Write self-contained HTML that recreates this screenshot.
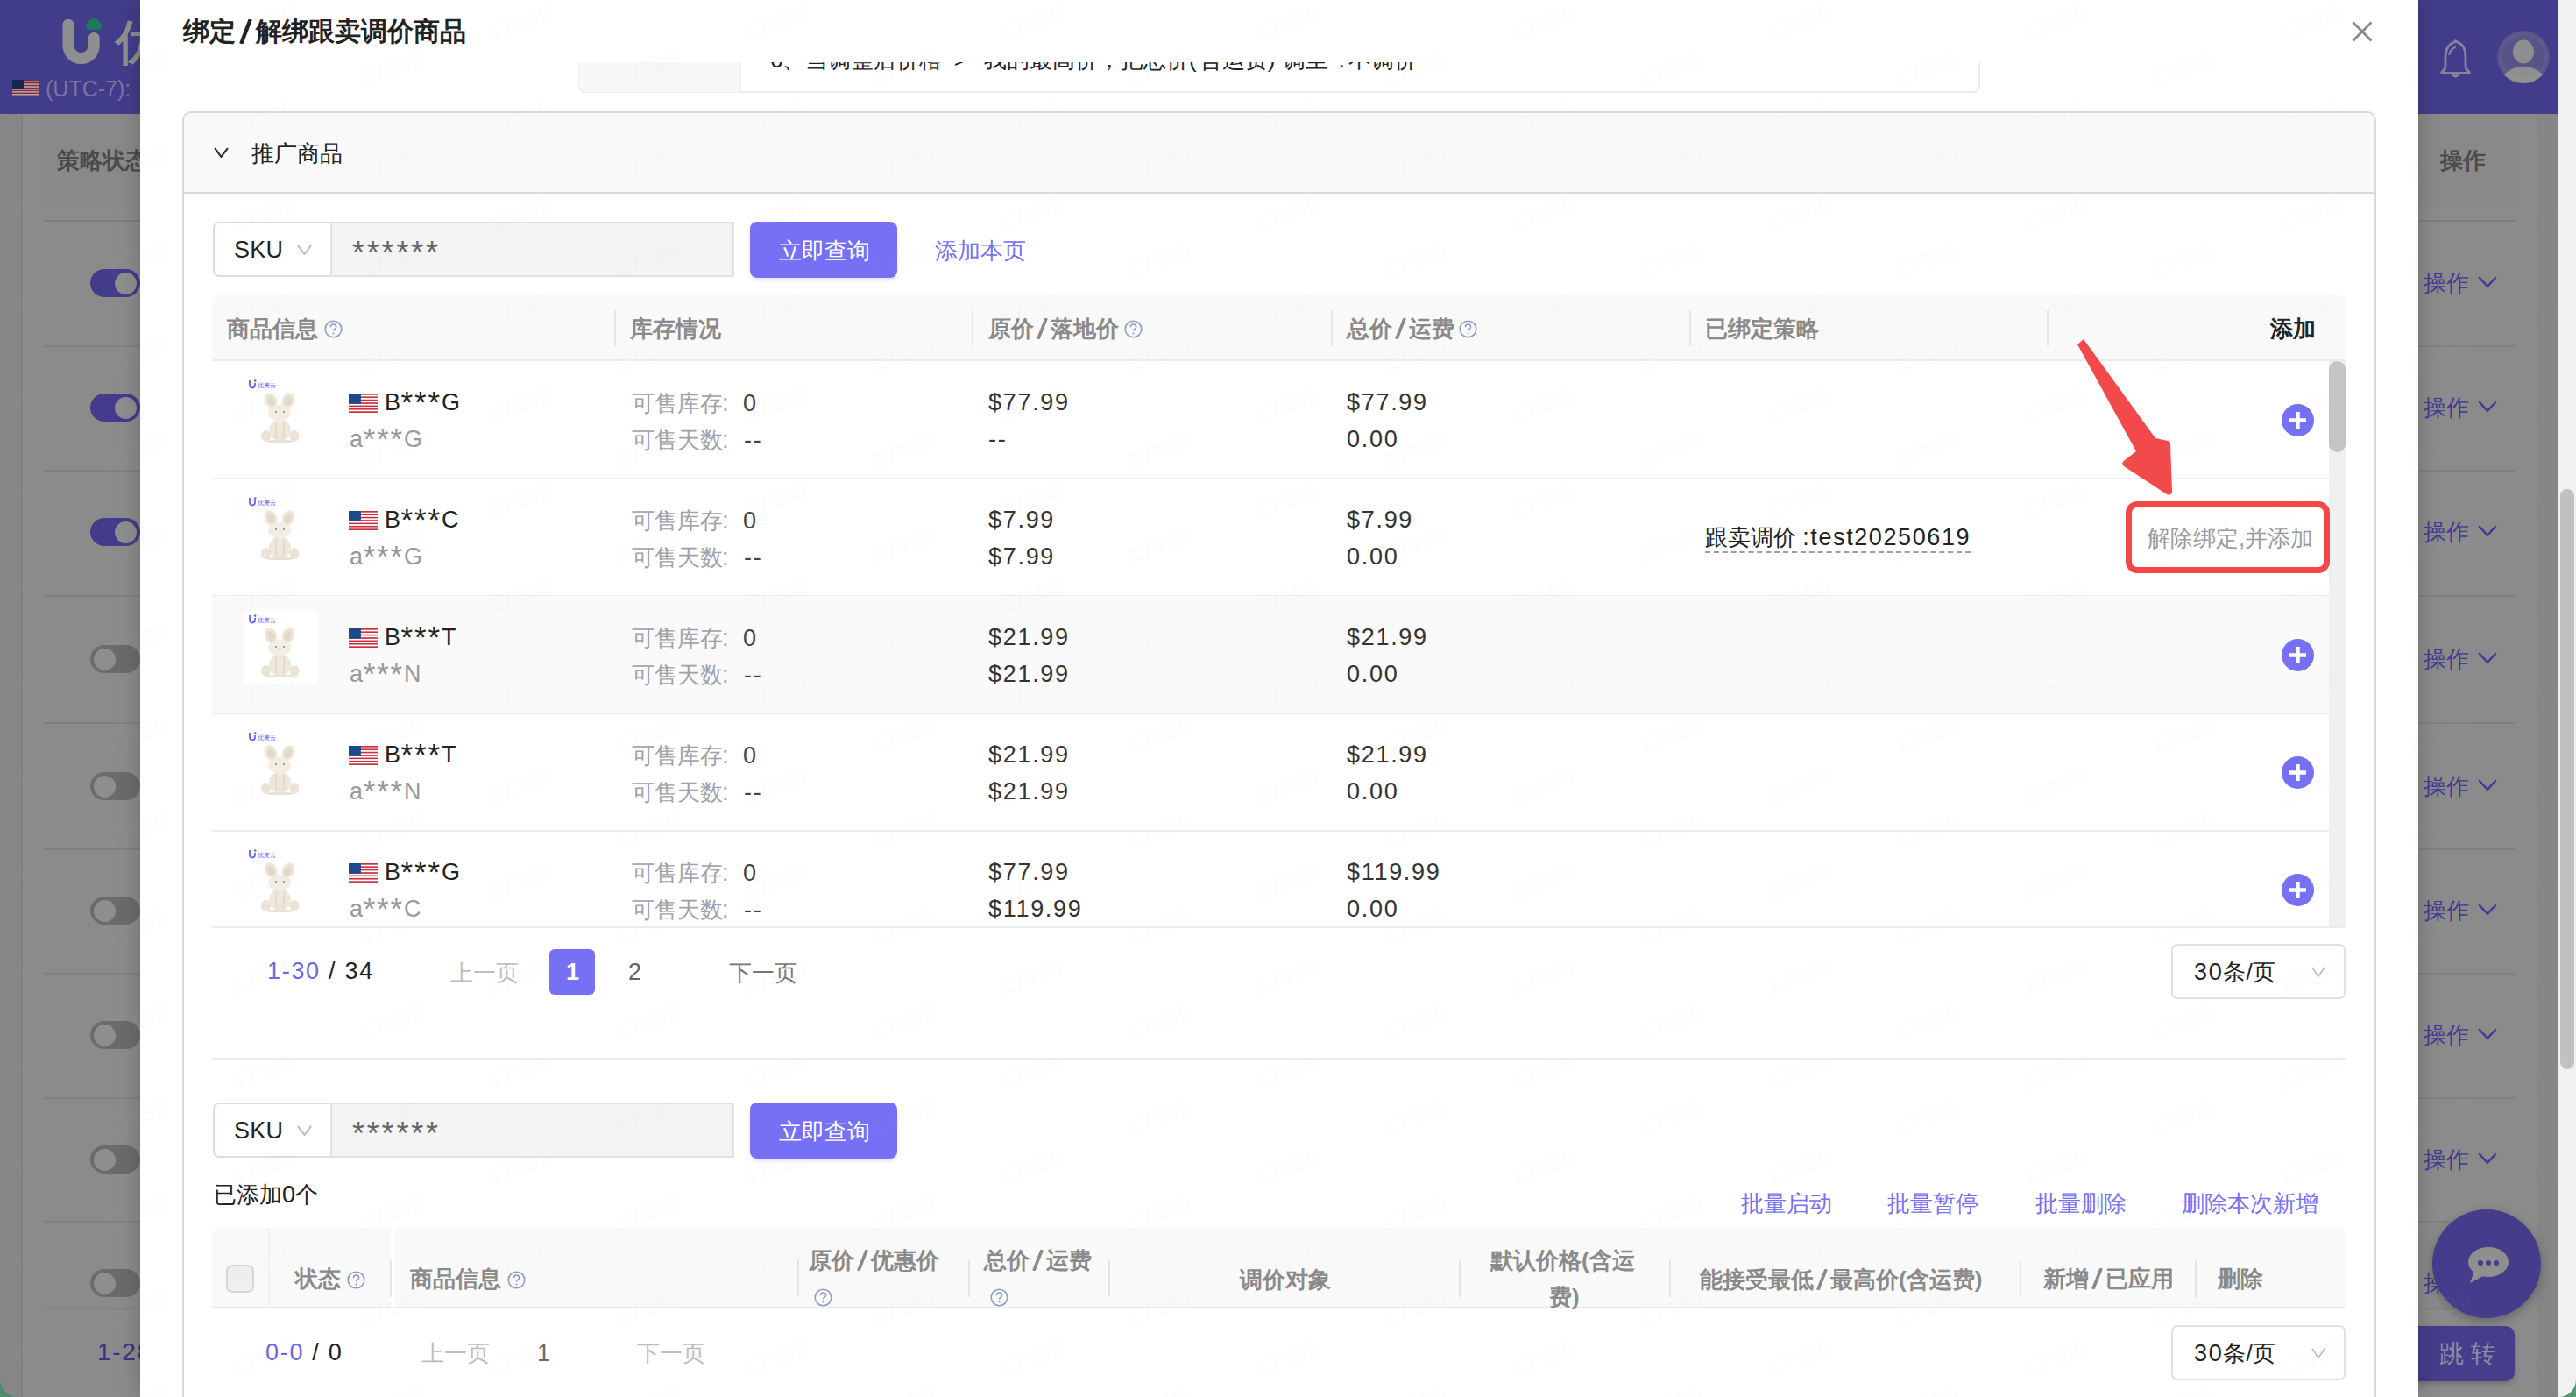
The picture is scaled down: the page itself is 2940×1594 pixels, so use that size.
<!DOCTYPE html><html><head><meta charset="utf-8"><style>
html,body{margin:0;padding:0}
body{width:2940px;height:1594px;overflow:hidden;position:relative;background:#8b8b8b;font-family:"Liberation Sans",sans-serif}
.a{position:absolute;box-sizing:border-box}
.t{position:absolute;white-space:nowrap}
</style></head><body>
<div class="a" style="left:0px;top:1550px;width:24px;height:44px;background:#4b8a6a"></div>
<div class="a" style="left:0px;top:130px;width:24px;height:1464px;background:#868686;border-bottom-left-radius:20px"></div>
<div class="a" style="left:24px;top:130px;width:2px;height:1464px;background:#7f7f7f"></div>
<div class="a" style="left:0px;top:0px;width:2920px;height:130px;background:#423d8a"></div>
<svg class="a" style="left:0px;top:0px;" width="160" height="130" viewBox="0 0 160 130"><path d="M78 28.2 V52 A14.6 14.6 0 0 0 107.2 52 V43.5" fill="none" stroke="#8f8f8f" stroke-width="13" stroke-linecap="round"/><ellipse cx="107.3" cy="26.5" rx="6.5" ry="5.5" fill="#1f7a5c"/><circle cx="102.8" cy="29.5" r="4.6" fill="#1f7a5c"/><circle cx="111.6" cy="29.5" r="4.6" fill="#1f7a5c"/><rect x="100" y="29" width="15" height="4.5" rx="2" fill="#1f7a5c"/></svg>
<div class="t" style="left:132px;top:28.0px;font-size:54px;line-height:40px;color:#8f8f8f;font-weight:bold;">优</div>
<svg class="a" style="left:14px;top:91px;opacity:1.0" width="31" height="19" viewBox="0 0 31 19"><rect x="0" y="0.00" width="31" height="1.76" fill="#8c2636"/><rect x="0" y="1.46" width="31" height="1.76" fill="#b6b6be"/><rect x="0" y="2.92" width="31" height="1.76" fill="#8c2636"/><rect x="0" y="4.38" width="31" height="1.76" fill="#b6b6be"/><rect x="0" y="5.85" width="31" height="1.76" fill="#8c2636"/><rect x="0" y="7.31" width="31" height="1.76" fill="#b6b6be"/><rect x="0" y="8.77" width="31" height="1.76" fill="#8c2636"/><rect x="0" y="10.23" width="31" height="1.76" fill="#b6b6be"/><rect x="0" y="11.69" width="31" height="1.76" fill="#8c2636"/><rect x="0" y="13.15" width="31" height="1.76" fill="#b6b6be"/><rect x="0" y="14.62" width="31" height="1.76" fill="#8c2636"/><rect x="0" y="16.08" width="31" height="1.76" fill="#b6b6be"/><rect x="0" y="17.54" width="31" height="1.76" fill="#8c2636"/><rect x="0" y="0" width="13.0" height="10.2" fill="#15284f"/></svg>
<div class="t" style="left:52px;top:81.0px;font-size:25px;line-height:40px;color:#78759f;font-weight:normal;">(UTC-7):</div>
<svg class="a" style="left:2780px;top:40px;" width="44" height="50" viewBox="0 0 44 50"><path d="M21.5 8 Q22 5.5 24.5 8 Q34 11 34 26 V36 Q34 39 38 42 Q39 43.5 37 43.5 H8 Q6 43.5 7 42 Q11 39 11 36 V26 Q11 11 21.5 8 Z" fill="none" stroke="#85849c" stroke-width="2.8" stroke-linejoin="round"/><path d="M18.5 44 Q22.5 50 26.5 44" fill="none" stroke="#85849c" stroke-width="2.8"/><path d="M15.5 22 Q17 16 22 14" fill="none" stroke="#85849c" stroke-width="2.2" stroke-linecap="round"/></svg>
<svg class="a" style="left:2850px;top:35px;" width="60" height="60" viewBox="0 0 60 60"><defs><clipPath id="cav"><circle cx="30" cy="30" r="30"/></clipPath></defs><circle cx="30" cy="30" r="30" fill="#58548a"/><g clip-path="url(#cav)"><ellipse cx="30" cy="24" rx="12" ry="13.5" fill="#8e8e8e"/><ellipse cx="30" cy="57" rx="24" ry="16" fill="#8e8e8e"/><circle cx="30" cy="30" r="26" fill="none" stroke="rgba(255,255,255,0.04)" stroke-width="4"/></g></svg>
<div class="a" style="left:50px;top:130px;width:110px;height:105px;background:#898989"></div>
<div class="t" style="left:65px;top:163.0px;font-size:26px;line-height:40px;color:#4a4a4a;font-weight:bold;">策略状态</div>
<div class="a" style="left:50px;top:251px;width:110px;height:2px;background:#7d7d7d"></div>
<div class="a" style="left:103px;top:307px;width:57px;height:32px;border-radius:16px;background:#433c8b"></div>
<div class="a" style="left:131px;top:311px;width:25px;height:25px;border-radius:50%;background:#8e8e8e"></div>
<div class="a" style="left:50px;top:394px;width:110px;height:2px;background:#808080"></div>
<div class="a" style="left:103px;top:449px;width:57px;height:32px;border-radius:16px;background:#433c8b"></div>
<div class="a" style="left:131px;top:453px;width:25px;height:25px;border-radius:50%;background:#8e8e8e"></div>
<div class="a" style="left:50px;top:536px;width:110px;height:2px;background:#808080"></div>
<div class="a" style="left:103px;top:591px;width:57px;height:32px;border-radius:16px;background:#433c8b"></div>
<div class="a" style="left:131px;top:595px;width:25px;height:25px;border-radius:50%;background:#8e8e8e"></div>
<div class="a" style="left:50px;top:679px;width:110px;height:2px;background:#808080"></div>
<div class="a" style="left:103px;top:736px;width:57px;height:32px;border-radius:16px;background:#6b6b6b"></div>
<div class="a" style="left:107px;top:740px;width:25px;height:25px;border-radius:50%;background:#8e8e8e"></div>
<div class="a" style="left:50px;top:824px;width:110px;height:2px;background:#808080"></div>
<div class="a" style="left:103px;top:881px;width:57px;height:32px;border-radius:16px;background:#6b6b6b"></div>
<div class="a" style="left:107px;top:885px;width:25px;height:25px;border-radius:50%;background:#8e8e8e"></div>
<div class="a" style="left:50px;top:968px;width:110px;height:2px;background:#808080"></div>
<div class="a" style="left:103px;top:1023px;width:57px;height:32px;border-radius:16px;background:#6b6b6b"></div>
<div class="a" style="left:107px;top:1027px;width:25px;height:25px;border-radius:50%;background:#8e8e8e"></div>
<div class="a" style="left:50px;top:1110px;width:110px;height:2px;background:#808080"></div>
<div class="a" style="left:103px;top:1165px;width:57px;height:32px;border-radius:16px;background:#6b6b6b"></div>
<div class="a" style="left:107px;top:1169px;width:25px;height:25px;border-radius:50%;background:#8e8e8e"></div>
<div class="a" style="left:50px;top:1252px;width:110px;height:2px;background:#808080"></div>
<div class="a" style="left:103px;top:1307px;width:57px;height:32px;border-radius:16px;background:#6b6b6b"></div>
<div class="a" style="left:107px;top:1311px;width:25px;height:25px;border-radius:50%;background:#8e8e8e"></div>
<div class="a" style="left:50px;top:1393px;width:110px;height:2px;background:#808080"></div>
<div class="a" style="left:103px;top:1448px;width:57px;height:32px;border-radius:16px;background:#6b6b6b"></div>
<div class="a" style="left:107px;top:1452px;width:25px;height:25px;border-radius:50%;background:#8e8e8e"></div>
<div class="t" style="left:111px;top:1523.0px;font-size:28px;line-height:40px;color:#3b3587;font-weight:normal;"><span style="font-size:28px;letter-spacing:1.7px">1-28</span></div>
<div class="a" style="left:50px;top:1492px;width:110px;height:2px;background:#808080"></div>
<div class="a" style="left:2760px;top:1492px;width:110px;height:2px;background:#808080"></div>
<div class="a" style="left:2895px;top:130px;width:25px;height:1464px;background:#858585"></div>
<div class="a" style="left:2760px;top:130px;width:110px;height:105px;background:#898989"></div>
<div class="t" style="left:2785px;top:163.0px;font-size:26px;line-height:40px;color:#4a4a4a;font-weight:bold;">操作</div>
<div class="a" style="left:2760px;top:251px;width:110px;height:2px;background:#7d7d7d"></div>
<div class="t" style="left:2766px;top:303.0px;font-size:26px;line-height:40px;color:#3f3a92;font-weight:normal;">操作</div>
<svg class="a" style="left:2828px;top:315px;" width="22" height="13" viewBox="0 0 22 13"><path d="M1.2 1.2 L11.0 11.8 L20.8 1.2" fill="none" stroke="#3f3a92" stroke-width="2.4"/></svg>
<div class="a" style="left:2760px;top:394px;width:110px;height:2px;background:#808080"></div>
<div class="t" style="left:2766px;top:445.0px;font-size:26px;line-height:40px;color:#3f3a92;font-weight:normal;">操作</div>
<svg class="a" style="left:2828px;top:457px;" width="22" height="13" viewBox="0 0 22 13"><path d="M1.2 1.2 L11.0 11.8 L20.8 1.2" fill="none" stroke="#3f3a92" stroke-width="2.4"/></svg>
<div class="a" style="left:2760px;top:536px;width:110px;height:2px;background:#808080"></div>
<div class="t" style="left:2766px;top:587.0px;font-size:26px;line-height:40px;color:#3f3a92;font-weight:normal;">操作</div>
<svg class="a" style="left:2828px;top:599px;" width="22" height="13" viewBox="0 0 22 13"><path d="M1.2 1.2 L11.0 11.8 L20.8 1.2" fill="none" stroke="#3f3a92" stroke-width="2.4"/></svg>
<div class="a" style="left:2760px;top:679px;width:110px;height:2px;background:#808080"></div>
<div class="t" style="left:2766px;top:732.0px;font-size:26px;line-height:40px;color:#3f3a92;font-weight:normal;">操作</div>
<svg class="a" style="left:2828px;top:744px;" width="22" height="13" viewBox="0 0 22 13"><path d="M1.2 1.2 L11.0 11.8 L20.8 1.2" fill="none" stroke="#3f3a92" stroke-width="2.4"/></svg>
<div class="a" style="left:2760px;top:824px;width:110px;height:2px;background:#808080"></div>
<div class="t" style="left:2766px;top:877.0px;font-size:26px;line-height:40px;color:#3f3a92;font-weight:normal;">操作</div>
<svg class="a" style="left:2828px;top:889px;" width="22" height="13" viewBox="0 0 22 13"><path d="M1.2 1.2 L11.0 11.8 L20.8 1.2" fill="none" stroke="#3f3a92" stroke-width="2.4"/></svg>
<div class="a" style="left:2760px;top:968px;width:110px;height:2px;background:#808080"></div>
<div class="t" style="left:2766px;top:1019.0px;font-size:26px;line-height:40px;color:#3f3a92;font-weight:normal;">操作</div>
<svg class="a" style="left:2828px;top:1031px;" width="22" height="13" viewBox="0 0 22 13"><path d="M1.2 1.2 L11.0 11.8 L20.8 1.2" fill="none" stroke="#3f3a92" stroke-width="2.4"/></svg>
<div class="a" style="left:2760px;top:1110px;width:110px;height:2px;background:#808080"></div>
<div class="t" style="left:2766px;top:1161.0px;font-size:26px;line-height:40px;color:#3f3a92;font-weight:normal;">操作</div>
<svg class="a" style="left:2828px;top:1173px;" width="22" height="13" viewBox="0 0 22 13"><path d="M1.2 1.2 L11.0 11.8 L20.8 1.2" fill="none" stroke="#3f3a92" stroke-width="2.4"/></svg>
<div class="a" style="left:2760px;top:1252px;width:110px;height:2px;background:#808080"></div>
<div class="t" style="left:2766px;top:1303.0px;font-size:26px;line-height:40px;color:#3f3a92;font-weight:normal;">操作</div>
<svg class="a" style="left:2828px;top:1315px;" width="22" height="13" viewBox="0 0 22 13"><path d="M1.2 1.2 L11.0 11.8 L20.8 1.2" fill="none" stroke="#3f3a92" stroke-width="2.4"/></svg>
<div class="a" style="left:2760px;top:1393px;width:110px;height:2px;background:#808080"></div>
<div class="t" style="left:2766px;top:1444.0px;font-size:26px;line-height:40px;color:#3f3a92;font-weight:normal;">操</div>
<div class="a" style="left:2776px;top:1380px;width:124px;height:124px;border-radius:50%;background:#453d8b;box-shadow:0 4px 12px rgba(0,0,0,.28)"></div>
<svg class="a" style="left:2814px;top:1422px;" width="50" height="44" viewBox="0 0 50 44"><ellipse cx="26" cy="18" rx="23" ry="17" fill="#8f8f8f"/><path d="M10 28 L5 42 L22 33 Z" fill="#8f8f8f"/><circle cx="17" cy="19" r="3" fill="#453d8b"/><circle cx="26" cy="19" r="3" fill="#453d8b"/><circle cx="35" cy="19" r="3" fill="#453d8b"/></svg>
<div class="a" style="left:2750px;top:1513px;width:120px;height:63px;border-radius:10px;background:#463d8c;box-shadow:0 3px 6px rgba(0,0,0,.2)"></div>
<div class="t" style="left:2784px;top:1525.0px;font-size:28px;line-height:40px;color:#8d8da6;font-weight:normal;">跳 转</div>
<div class="a" style="left:2920px;top:0px;width:20px;height:1594px;background:#f1f1f1"></div>
<div class="a" style="left:2922px;top:558px;width:16px;height:662px;border-radius:8px;background:#c1c1c1"></div>
<div class="a" style="left:2920px;top:1556px;width:20px;height:38px;background:#4f9c74"></div>
<div class="a" style="left:2920px;top:1530px;width:20px;height:64px;background:#f1f1f1;border-bottom-right-radius:20px"></div>
<div class="a" style="left:160px;top:0px;width:2600px;height:1594px;background:#ffffff;box-shadow:0 0 24px rgba(0,0,0,.22)"></div>
<div class="t" style="left:209px;top:16.0px;font-size:30px;line-height:40px;color:#222;font-weight:bold;">绑定<svg style="display:inline-block;vertical-align:-4px;margin:0 4px 0 4px" width="15" height="28" viewBox="0 0 15 28"><path d="M12.8 0 L2.2 28" stroke="currentColor" stroke-width="4.4"/></svg>解绑跟卖调价商品</div>
<svg class="a" style="left:2684px;top:24px;" width="24" height="24" viewBox="0 0 24 24"><path d="M1.5 1.5 L22.5 22.5 M22.5 1.5 L1.5 22.5" stroke="#8a8a8a" stroke-width="2.8"/></svg>
<div class="a" style="left:160px;top:71px;width:2600px;height:1523px;overflow:hidden">
<div class="a" style="left:500px;top:-51px;width:1600px;height:86px;border:2px solid #ececec;border-radius:8px;background:#fff"></div>
<div class="a" style="left:501px;top:-50px;width:185px;height:84px;background:#f7f7f7;border-right:2px solid #ececec;border-radius:0 0 0 8px"></div>
<div class="t" style="left:719px;top:-23.0px;font-size:26px;line-height:40px;color:#222;font-weight:normal;">6、当调整后价格<span style="letter-spacing:6px"> &gt; </span>我的最高价，把总价<span style="letter-spacing:3px">(</span>含运费<span style="letter-spacing:9px">)</span>调至<span style="letter-spacing:4px"> :</span>不调价</div>
<div class="a" style="left:48px;top:56px;width:2504px;height:1600px;border:2px solid #d9d9d9;border-radius:10px;background:#fff"></div>
<div class="a" style="left:50px;top:58px;width:2500px;height:92px;background:#f9f9f9;border-bottom:2px solid #d9d9d9;border-radius:8px 8px 0 0"></div>
<svg class="a" style="left:84px;top:97px;" width="17" height="12" viewBox="0 0 17 12"><path d="M1.1 1.1 L8.5 10.9 L15.9 1.1" fill="none" stroke="#333" stroke-width="2.2"/></svg>
<div class="t" style="left:127px;top:84.0px;font-size:26px;line-height:40px;color:#222;font-weight:normal;">推广商品</div>
<div class="a" style="left:83px;top:182px;width:135px;height:63px;border:2px solid #dcdce6;border-right:none;border-radius:7px 0 0 7px;background:#fff"></div>
<div class="t" style="left:107px;top:194.0px;font-size:26px;line-height:40px;color:#222;font-weight:normal;"><span style="font-size:27px;letter-spacing:0.3px">SKU</span></div>
<svg class="a" style="left:179px;top:208px;" width="17" height="12" viewBox="0 0 17 12"><path d="M0.9 0.9 L8.5 11.1 L16.1 0.9" fill="none" stroke="#b9b9c2" stroke-width="1.8"/></svg>
<div class="a" style="left:217px;top:182px;width:461px;height:63px;border:2px solid #e0e0e6;background:#f4f4f4"></div>
<div class="t" style="left:242px;top:197.5px;font-size:26px;line-height:40px;color:#666;font-weight:normal;"><span style="font-size:36px;letter-spacing:2.8px">******</span></div>
<div class="a" style="left:696px;top:182px;width:168px;height:64px;background:#7670f4;border-radius:8px;box-shadow:0 3px 4px rgba(118,112,244,.18)"></div>
<div class="t" style="left:729px;top:195.0px;font-size:26px;line-height:40px;color:#fff;font-weight:normal;">立即查询</div>
<div class="t" style="left:907px;top:195.0px;font-size:26px;line-height:40px;color:#7670f4;font-weight:normal;">添加本页</div>
<div class="a" style="left:82px;top:266px;width:2435px;height:75px;background:#f9f9f9;border-radius:8px 8px 0 0;border-bottom:2px solid #ececec"></div>
<div class="t" style="left:99px;top:284.0px;font-size:26px;line-height:40px;color:#8a8a8a;font-weight:bold;">商品信息</div>
<svg class="a" style="left:210px;top:294px;" width="21" height="21" viewBox="0 0 21 21"><circle cx="10.5" cy="10.5" r="9.3" fill="none" stroke="#8c9cc4" stroke-width="1.6"/><path d="M7.4 8.2 Q7.4 5 10.5 5 Q13.6 5 13.6 7.9 Q13.6 9.8 11.3 10.8 Q10.5 11.3 10.5 12.6" fill="none" stroke="#8c9cc4" stroke-width="1.5"/><circle cx="10.5" cy="15.4" r="1" fill="#8c9cc4"/></svg>
<div class="t" style="left:559px;top:284.0px;font-size:26px;line-height:40px;color:#8a8a8a;font-weight:bold;">库存情况</div>
<div class="t" style="left:968px;top:284.0px;font-size:26px;line-height:40px;color:#8a8a8a;font-weight:bold;">原价<svg style="display:inline-block;vertical-align:-3px;margin:0 3px 0 3px" width="13" height="24" viewBox="0 0 13 24"><path d="M11.2 0 L1.8 24" stroke="currentColor" stroke-width="3.6"/></svg>落地价</div>
<svg class="a" style="left:1123px;top:294px;" width="21" height="21" viewBox="0 0 21 21"><circle cx="10.5" cy="10.5" r="9.3" fill="none" stroke="#8c9cc4" stroke-width="1.6"/><path d="M7.4 8.2 Q7.4 5 10.5 5 Q13.6 5 13.6 7.9 Q13.6 9.8 11.3 10.8 Q10.5 11.3 10.5 12.6" fill="none" stroke="#8c9cc4" stroke-width="1.5"/><circle cx="10.5" cy="15.4" r="1" fill="#8c9cc4"/></svg>
<div class="t" style="left:1377px;top:284.0px;font-size:26px;line-height:40px;color:#8a8a8a;font-weight:bold;">总价<svg style="display:inline-block;vertical-align:-3px;margin:0 3px 0 3px" width="13" height="24" viewBox="0 0 13 24"><path d="M11.2 0 L1.8 24" stroke="currentColor" stroke-width="3.6"/></svg>运费</div>
<svg class="a" style="left:1505px;top:294px;" width="21" height="21" viewBox="0 0 21 21"><circle cx="10.5" cy="10.5" r="9.3" fill="none" stroke="#8c9cc4" stroke-width="1.6"/><path d="M7.4 8.2 Q7.4 5 10.5 5 Q13.6 5 13.6 7.9 Q13.6 9.8 11.3 10.8 Q10.5 11.3 10.5 12.6" fill="none" stroke="#8c9cc4" stroke-width="1.5"/><circle cx="10.5" cy="15.4" r="1" fill="#8c9cc4"/></svg>
<div class="t" style="left:1786px;top:284.0px;font-size:26px;line-height:40px;color:#8a8a8a;font-weight:bold;">已绑定策略</div>
<div class="t" style="left:2431px;top:284.0px;font-size:26px;line-height:40px;color:#222;font-weight:bold;">添加</div>
<div class="a" style="left:541px;top:283px;width:2px;height:41px;background:#e6e6e6"></div>
<div class="a" style="left:949px;top:283px;width:2px;height:41px;background:#e6e6e6"></div>
<div class="a" style="left:1359px;top:283px;width:2px;height:41px;background:#e6e6e6"></div>
<div class="a" style="left:1768px;top:283px;width:2px;height:41px;background:#e6e6e6"></div>
<div class="a" style="left:2176px;top:283px;width:2px;height:41px;background:#e6e6e6"></div>
<div class="a" style="left:82px;top:474px;width:2416px;height:2px;background:#ececec"></div>
<svg class="a" style="left:118px;top:358px;" width="84" height="84" viewBox="0 0 84 84"><path d="M7 5 V10 Q7 13.5 10 13.5 Q13 13.5 13 10 V8" fill="none" stroke="#6a5ff2" stroke-width="1.8"/><circle cx="13.2" cy="5.6" r="1.3" fill="#2aa06a"/><text x="16" y="13" font-size="7" fill="#6a5ff2" font-family="Liberation Sans">优麦云</text><ellipse cx="31" cy="28" rx="7" ry="9" fill="#ede7d9" transform="rotate(-25 31 28)"/><ellipse cx="51" cy="28" rx="7" ry="9" fill="#ede7d9" transform="rotate(25 51 28)"/><ellipse cx="31.5" cy="29" rx="4" ry="6" fill="#e4d9c6" transform="rotate(-25 31.5 29)"/><ellipse cx="50.5" cy="29" rx="4" ry="6" fill="#e4d9c6" transform="rotate(25 50.5 29)"/><ellipse cx="41.5" cy="62" rx="12.5" ry="12.5" fill="#eee8db"/><ellipse cx="41" cy="42" rx="13" ry="9.5" fill="#f2eee4"/><ellipse cx="25.5" cy="68.5" rx="5.5" ry="6.5" fill="#ebe4d5"/><ellipse cx="58" cy="68.5" rx="5.5" ry="6.5" fill="#ebe4d5"/><path d="M37 52 Q36 62 38 72 M46 52 Q47 62 45 72" fill="none" stroke="#ddd4c2" stroke-width="1.2"/><ellipse cx="41.5" cy="74.5" rx="16" ry="1.6" fill="#e6e0d4"/><circle cx="37" cy="41" r="0.9" fill="#6a7a8a"/><circle cx="46" cy="41" r="0.9" fill="#6a7a8a"/><circle cx="41.5" cy="43" r="1.1" fill="#e8a0a8"/></svg>
<svg class="a" style="left:238px;top:378px;opacity:1.0" width="33" height="22" viewBox="0 0 33 22"><rect x="0" y="0.00" width="33" height="1.99" fill="#c9303e"/><rect x="0" y="1.69" width="33" height="1.99" fill="#ffffff"/><rect x="0" y="3.38" width="33" height="1.99" fill="#c9303e"/><rect x="0" y="5.08" width="33" height="1.99" fill="#ffffff"/><rect x="0" y="6.77" width="33" height="1.99" fill="#c9303e"/><rect x="0" y="8.46" width="33" height="1.99" fill="#ffffff"/><rect x="0" y="10.15" width="33" height="1.99" fill="#c9303e"/><rect x="0" y="11.85" width="33" height="1.99" fill="#ffffff"/><rect x="0" y="13.54" width="33" height="1.99" fill="#c9303e"/><rect x="0" y="15.23" width="33" height="1.99" fill="#ffffff"/><rect x="0" y="16.92" width="33" height="1.99" fill="#c9303e"/><rect x="0" y="18.62" width="33" height="1.99" fill="#ffffff"/><rect x="0" y="20.31" width="33" height="1.99" fill="#c9303e"/><rect x="0" y="0" width="13.9" height="11.8" fill="#1f4a8a"/></svg>
<div class="t" style="left:279px;top:368.0px;font-size:26px;line-height:40px;color:#222;font-weight:normal;"><span style="font-size:27px;letter-spacing:0.6px">B<span style="font-size:35px;letter-spacing:1.8px;vertical-align:-3px">***</span>G</span></div>
<div class="t" style="left:239px;top:410.0px;font-size:26px;line-height:40px;color:#999;font-weight:normal;"><span style="font-size:27px;letter-spacing:0.6px">a<span style="font-size:35px;letter-spacing:1.8px;vertical-align:-3px">***</span>G</span></div>
<div class="t" style="left:561px;top:369.0px;font-size:26px;line-height:40px;color:#9ea2aa;font-weight:normal;">可售库存</div>
<div class="t" style="left:664px;top:369.0px;font-size:27px;line-height:40px;color:#9ea2aa;font-weight:normal;">:</div>
<div class="t" style="left:688px;top:369.0px;font-size:26px;line-height:40px;color:#444;font-weight:normal;"><span style="font-size:27px;letter-spacing:1.7px">0</span></div>
<div class="t" style="left:561px;top:411.0px;font-size:26px;line-height:40px;color:#9ea2aa;font-weight:normal;">可售天数</div>
<div class="t" style="left:664px;top:411.0px;font-size:27px;line-height:40px;color:#9ea2aa;font-weight:normal;">:</div>
<div class="t" style="left:689px;top:411.0px;font-size:26px;line-height:40px;color:#444;font-weight:normal;"><span style="font-size:27px;letter-spacing:1.7px">--</span></div>
<div class="t" style="left:968px;top:368.0px;font-size:26px;line-height:40px;color:#333;font-weight:normal;"><span style="font-size:27px;letter-spacing:1.7px">$77.99</span></div>
<div class="t" style="left:968px;top:410.0px;font-size:26px;line-height:40px;color:#333;font-weight:normal;"><span style="font-size:27px;letter-spacing:1.7px">--</span></div>
<div class="t" style="left:1377px;top:368.0px;font-size:26px;line-height:40px;color:#333;font-weight:normal;"><span style="font-size:27px;letter-spacing:1.7px">$77.99</span></div>
<div class="t" style="left:1377px;top:410.0px;font-size:26px;line-height:40px;color:#333;font-weight:normal;"><span style="font-size:27px;letter-spacing:1.7px">0.00</span></div>
<svg class="a" style="left:2444px;top:390px;" width="37" height="37" viewBox="0 0 37 37"><circle cx="18.5" cy="18.5" r="18.5" fill="#7670f4"/><path d="M18.5 9 V28 M9 18.5 H28" stroke="#fff" stroke-width="4.5"/></svg>
<div class="a" style="left:82px;top:608px;width:2416px;height:2px;background:#ececec"></div>
<svg class="a" style="left:118px;top:492px;" width="84" height="84" viewBox="0 0 84 84"><path d="M7 5 V10 Q7 13.5 10 13.5 Q13 13.5 13 10 V8" fill="none" stroke="#6a5ff2" stroke-width="1.8"/><circle cx="13.2" cy="5.6" r="1.3" fill="#2aa06a"/><text x="16" y="13" font-size="7" fill="#6a5ff2" font-family="Liberation Sans">优麦云</text><ellipse cx="31" cy="28" rx="7" ry="9" fill="#ede7d9" transform="rotate(-25 31 28)"/><ellipse cx="51" cy="28" rx="7" ry="9" fill="#ede7d9" transform="rotate(25 51 28)"/><ellipse cx="31.5" cy="29" rx="4" ry="6" fill="#e4d9c6" transform="rotate(-25 31.5 29)"/><ellipse cx="50.5" cy="29" rx="4" ry="6" fill="#e4d9c6" transform="rotate(25 50.5 29)"/><ellipse cx="41.5" cy="62" rx="12.5" ry="12.5" fill="#eee8db"/><ellipse cx="41" cy="42" rx="13" ry="9.5" fill="#f2eee4"/><ellipse cx="25.5" cy="68.5" rx="5.5" ry="6.5" fill="#ebe4d5"/><ellipse cx="58" cy="68.5" rx="5.5" ry="6.5" fill="#ebe4d5"/><path d="M37 52 Q36 62 38 72 M46 52 Q47 62 45 72" fill="none" stroke="#ddd4c2" stroke-width="1.2"/><ellipse cx="41.5" cy="74.5" rx="16" ry="1.6" fill="#e6e0d4"/><circle cx="37" cy="41" r="0.9" fill="#6a7a8a"/><circle cx="46" cy="41" r="0.9" fill="#6a7a8a"/><circle cx="41.5" cy="43" r="1.1" fill="#e8a0a8"/></svg>
<svg class="a" style="left:238px;top:512px;opacity:1.0" width="33" height="22" viewBox="0 0 33 22"><rect x="0" y="0.00" width="33" height="1.99" fill="#c9303e"/><rect x="0" y="1.69" width="33" height="1.99" fill="#ffffff"/><rect x="0" y="3.38" width="33" height="1.99" fill="#c9303e"/><rect x="0" y="5.08" width="33" height="1.99" fill="#ffffff"/><rect x="0" y="6.77" width="33" height="1.99" fill="#c9303e"/><rect x="0" y="8.46" width="33" height="1.99" fill="#ffffff"/><rect x="0" y="10.15" width="33" height="1.99" fill="#c9303e"/><rect x="0" y="11.85" width="33" height="1.99" fill="#ffffff"/><rect x="0" y="13.54" width="33" height="1.99" fill="#c9303e"/><rect x="0" y="15.23" width="33" height="1.99" fill="#ffffff"/><rect x="0" y="16.92" width="33" height="1.99" fill="#c9303e"/><rect x="0" y="18.62" width="33" height="1.99" fill="#ffffff"/><rect x="0" y="20.31" width="33" height="1.99" fill="#c9303e"/><rect x="0" y="0" width="13.9" height="11.8" fill="#1f4a8a"/></svg>
<div class="t" style="left:279px;top:502.0px;font-size:26px;line-height:40px;color:#222;font-weight:normal;"><span style="font-size:27px;letter-spacing:0.6px">B<span style="font-size:35px;letter-spacing:1.8px;vertical-align:-3px">***</span>C</span></div>
<div class="t" style="left:239px;top:544.0px;font-size:26px;line-height:40px;color:#999;font-weight:normal;"><span style="font-size:27px;letter-spacing:0.6px">a<span style="font-size:35px;letter-spacing:1.8px;vertical-align:-3px">***</span>G</span></div>
<div class="t" style="left:561px;top:503.0px;font-size:26px;line-height:40px;color:#9ea2aa;font-weight:normal;">可售库存</div>
<div class="t" style="left:664px;top:503.0px;font-size:27px;line-height:40px;color:#9ea2aa;font-weight:normal;">:</div>
<div class="t" style="left:688px;top:503.0px;font-size:26px;line-height:40px;color:#444;font-weight:normal;"><span style="font-size:27px;letter-spacing:1.7px">0</span></div>
<div class="t" style="left:561px;top:545.0px;font-size:26px;line-height:40px;color:#9ea2aa;font-weight:normal;">可售天数</div>
<div class="t" style="left:664px;top:545.0px;font-size:27px;line-height:40px;color:#9ea2aa;font-weight:normal;">:</div>
<div class="t" style="left:689px;top:545.0px;font-size:26px;line-height:40px;color:#444;font-weight:normal;"><span style="font-size:27px;letter-spacing:1.7px">--</span></div>
<div class="t" style="left:968px;top:502.0px;font-size:26px;line-height:40px;color:#333;font-weight:normal;"><span style="font-size:27px;letter-spacing:1.7px">$7.99</span></div>
<div class="t" style="left:968px;top:544.0px;font-size:26px;line-height:40px;color:#333;font-weight:normal;"><span style="font-size:27px;letter-spacing:1.7px">$7.99</span></div>
<div class="t" style="left:1377px;top:502.0px;font-size:26px;line-height:40px;color:#333;font-weight:normal;"><span style="font-size:27px;letter-spacing:1.7px">$7.99</span></div>
<div class="t" style="left:1377px;top:544.0px;font-size:26px;line-height:40px;color:#333;font-weight:normal;"><span style="font-size:27px;letter-spacing:1.7px">0.00</span></div>
<div class="a" style="left:82px;top:609px;width:2416px;height:134px;background:#fafafa"></div>
<div class="a" style="left:82px;top:742px;width:2416px;height:2px;background:#ececec"></div>
<svg class="a" style="left:118px;top:626px;" width="84" height="84" viewBox="0 0 84 84"><rect width="84" height="84" fill="#fff"/><path d="M7 5 V10 Q7 13.5 10 13.5 Q13 13.5 13 10 V8" fill="none" stroke="#6a5ff2" stroke-width="1.8"/><circle cx="13.2" cy="5.6" r="1.3" fill="#2aa06a"/><text x="16" y="13" font-size="7" fill="#6a5ff2" font-family="Liberation Sans">优麦云</text><ellipse cx="31" cy="28" rx="7" ry="9" fill="#ede7d9" transform="rotate(-25 31 28)"/><ellipse cx="51" cy="28" rx="7" ry="9" fill="#ede7d9" transform="rotate(25 51 28)"/><ellipse cx="31.5" cy="29" rx="4" ry="6" fill="#e4d9c6" transform="rotate(-25 31.5 29)"/><ellipse cx="50.5" cy="29" rx="4" ry="6" fill="#e4d9c6" transform="rotate(25 50.5 29)"/><ellipse cx="41.5" cy="62" rx="12.5" ry="12.5" fill="#eee8db"/><ellipse cx="41" cy="42" rx="13" ry="9.5" fill="#f2eee4"/><ellipse cx="25.5" cy="68.5" rx="5.5" ry="6.5" fill="#ebe4d5"/><ellipse cx="58" cy="68.5" rx="5.5" ry="6.5" fill="#ebe4d5"/><path d="M37 52 Q36 62 38 72 M46 52 Q47 62 45 72" fill="none" stroke="#ddd4c2" stroke-width="1.2"/><ellipse cx="41.5" cy="74.5" rx="16" ry="1.6" fill="#e6e0d4"/><circle cx="37" cy="41" r="0.9" fill="#6a7a8a"/><circle cx="46" cy="41" r="0.9" fill="#6a7a8a"/><circle cx="41.5" cy="43" r="1.1" fill="#e8a0a8"/></svg>
<svg class="a" style="left:238px;top:646px;opacity:1.0" width="33" height="22" viewBox="0 0 33 22"><rect x="0" y="0.00" width="33" height="1.99" fill="#c9303e"/><rect x="0" y="1.69" width="33" height="1.99" fill="#ffffff"/><rect x="0" y="3.38" width="33" height="1.99" fill="#c9303e"/><rect x="0" y="5.08" width="33" height="1.99" fill="#ffffff"/><rect x="0" y="6.77" width="33" height="1.99" fill="#c9303e"/><rect x="0" y="8.46" width="33" height="1.99" fill="#ffffff"/><rect x="0" y="10.15" width="33" height="1.99" fill="#c9303e"/><rect x="0" y="11.85" width="33" height="1.99" fill="#ffffff"/><rect x="0" y="13.54" width="33" height="1.99" fill="#c9303e"/><rect x="0" y="15.23" width="33" height="1.99" fill="#ffffff"/><rect x="0" y="16.92" width="33" height="1.99" fill="#c9303e"/><rect x="0" y="18.62" width="33" height="1.99" fill="#ffffff"/><rect x="0" y="20.31" width="33" height="1.99" fill="#c9303e"/><rect x="0" y="0" width="13.9" height="11.8" fill="#1f4a8a"/></svg>
<div class="t" style="left:279px;top:636.0px;font-size:26px;line-height:40px;color:#222;font-weight:normal;"><span style="font-size:27px;letter-spacing:0.6px">B<span style="font-size:35px;letter-spacing:1.8px;vertical-align:-3px">***</span>T</span></div>
<div class="t" style="left:239px;top:678.0px;font-size:26px;line-height:40px;color:#999;font-weight:normal;"><span style="font-size:27px;letter-spacing:0.6px">a<span style="font-size:35px;letter-spacing:1.8px;vertical-align:-3px">***</span>N</span></div>
<div class="t" style="left:561px;top:637.0px;font-size:26px;line-height:40px;color:#9ea2aa;font-weight:normal;">可售库存</div>
<div class="t" style="left:664px;top:637.0px;font-size:27px;line-height:40px;color:#9ea2aa;font-weight:normal;">:</div>
<div class="t" style="left:688px;top:637.0px;font-size:26px;line-height:40px;color:#444;font-weight:normal;"><span style="font-size:27px;letter-spacing:1.7px">0</span></div>
<div class="t" style="left:561px;top:679.0px;font-size:26px;line-height:40px;color:#9ea2aa;font-weight:normal;">可售天数</div>
<div class="t" style="left:664px;top:679.0px;font-size:27px;line-height:40px;color:#9ea2aa;font-weight:normal;">:</div>
<div class="t" style="left:689px;top:679.0px;font-size:26px;line-height:40px;color:#444;font-weight:normal;"><span style="font-size:27px;letter-spacing:1.7px">--</span></div>
<div class="t" style="left:968px;top:636.0px;font-size:26px;line-height:40px;color:#333;font-weight:normal;"><span style="font-size:27px;letter-spacing:1.7px">$21.99</span></div>
<div class="t" style="left:968px;top:678.0px;font-size:26px;line-height:40px;color:#333;font-weight:normal;"><span style="font-size:27px;letter-spacing:1.7px">$21.99</span></div>
<div class="t" style="left:1377px;top:636.0px;font-size:26px;line-height:40px;color:#333;font-weight:normal;"><span style="font-size:27px;letter-spacing:1.7px">$21.99</span></div>
<div class="t" style="left:1377px;top:678.0px;font-size:26px;line-height:40px;color:#333;font-weight:normal;"><span style="font-size:27px;letter-spacing:1.7px">0.00</span></div>
<svg class="a" style="left:2444px;top:658px;" width="37" height="37" viewBox="0 0 37 37"><circle cx="18.5" cy="18.5" r="18.5" fill="#7670f4"/><path d="M18.5 9 V28 M9 18.5 H28" stroke="#fff" stroke-width="4.5"/></svg>
<div class="a" style="left:82px;top:876px;width:2416px;height:2px;background:#ececec"></div>
<svg class="a" style="left:118px;top:760px;" width="84" height="84" viewBox="0 0 84 84"><path d="M7 5 V10 Q7 13.5 10 13.5 Q13 13.5 13 10 V8" fill="none" stroke="#6a5ff2" stroke-width="1.8"/><circle cx="13.2" cy="5.6" r="1.3" fill="#2aa06a"/><text x="16" y="13" font-size="7" fill="#6a5ff2" font-family="Liberation Sans">优麦云</text><ellipse cx="31" cy="28" rx="7" ry="9" fill="#ede7d9" transform="rotate(-25 31 28)"/><ellipse cx="51" cy="28" rx="7" ry="9" fill="#ede7d9" transform="rotate(25 51 28)"/><ellipse cx="31.5" cy="29" rx="4" ry="6" fill="#e4d9c6" transform="rotate(-25 31.5 29)"/><ellipse cx="50.5" cy="29" rx="4" ry="6" fill="#e4d9c6" transform="rotate(25 50.5 29)"/><ellipse cx="41.5" cy="62" rx="12.5" ry="12.5" fill="#eee8db"/><ellipse cx="41" cy="42" rx="13" ry="9.5" fill="#f2eee4"/><ellipse cx="25.5" cy="68.5" rx="5.5" ry="6.5" fill="#ebe4d5"/><ellipse cx="58" cy="68.5" rx="5.5" ry="6.5" fill="#ebe4d5"/><path d="M37 52 Q36 62 38 72 M46 52 Q47 62 45 72" fill="none" stroke="#ddd4c2" stroke-width="1.2"/><ellipse cx="41.5" cy="74.5" rx="16" ry="1.6" fill="#e6e0d4"/><circle cx="37" cy="41" r="0.9" fill="#6a7a8a"/><circle cx="46" cy="41" r="0.9" fill="#6a7a8a"/><circle cx="41.5" cy="43" r="1.1" fill="#e8a0a8"/></svg>
<svg class="a" style="left:238px;top:780px;opacity:1.0" width="33" height="22" viewBox="0 0 33 22"><rect x="0" y="0.00" width="33" height="1.99" fill="#c9303e"/><rect x="0" y="1.69" width="33" height="1.99" fill="#ffffff"/><rect x="0" y="3.38" width="33" height="1.99" fill="#c9303e"/><rect x="0" y="5.08" width="33" height="1.99" fill="#ffffff"/><rect x="0" y="6.77" width="33" height="1.99" fill="#c9303e"/><rect x="0" y="8.46" width="33" height="1.99" fill="#ffffff"/><rect x="0" y="10.15" width="33" height="1.99" fill="#c9303e"/><rect x="0" y="11.85" width="33" height="1.99" fill="#ffffff"/><rect x="0" y="13.54" width="33" height="1.99" fill="#c9303e"/><rect x="0" y="15.23" width="33" height="1.99" fill="#ffffff"/><rect x="0" y="16.92" width="33" height="1.99" fill="#c9303e"/><rect x="0" y="18.62" width="33" height="1.99" fill="#ffffff"/><rect x="0" y="20.31" width="33" height="1.99" fill="#c9303e"/><rect x="0" y="0" width="13.9" height="11.8" fill="#1f4a8a"/></svg>
<div class="t" style="left:279px;top:770.0px;font-size:26px;line-height:40px;color:#222;font-weight:normal;"><span style="font-size:27px;letter-spacing:0.6px">B<span style="font-size:35px;letter-spacing:1.8px;vertical-align:-3px">***</span>T</span></div>
<div class="t" style="left:239px;top:812.0px;font-size:26px;line-height:40px;color:#999;font-weight:normal;"><span style="font-size:27px;letter-spacing:0.6px">a<span style="font-size:35px;letter-spacing:1.8px;vertical-align:-3px">***</span>N</span></div>
<div class="t" style="left:561px;top:771.0px;font-size:26px;line-height:40px;color:#9ea2aa;font-weight:normal;">可售库存</div>
<div class="t" style="left:664px;top:771.0px;font-size:27px;line-height:40px;color:#9ea2aa;font-weight:normal;">:</div>
<div class="t" style="left:688px;top:771.0px;font-size:26px;line-height:40px;color:#444;font-weight:normal;"><span style="font-size:27px;letter-spacing:1.7px">0</span></div>
<div class="t" style="left:561px;top:813.0px;font-size:26px;line-height:40px;color:#9ea2aa;font-weight:normal;">可售天数</div>
<div class="t" style="left:664px;top:813.0px;font-size:27px;line-height:40px;color:#9ea2aa;font-weight:normal;">:</div>
<div class="t" style="left:689px;top:813.0px;font-size:26px;line-height:40px;color:#444;font-weight:normal;"><span style="font-size:27px;letter-spacing:1.7px">--</span></div>
<div class="t" style="left:968px;top:770.0px;font-size:26px;line-height:40px;color:#333;font-weight:normal;"><span style="font-size:27px;letter-spacing:1.7px">$21.99</span></div>
<div class="t" style="left:968px;top:812.0px;font-size:26px;line-height:40px;color:#333;font-weight:normal;"><span style="font-size:27px;letter-spacing:1.7px">$21.99</span></div>
<div class="t" style="left:1377px;top:770.0px;font-size:26px;line-height:40px;color:#333;font-weight:normal;"><span style="font-size:27px;letter-spacing:1.7px">$21.99</span></div>
<div class="t" style="left:1377px;top:812.0px;font-size:26px;line-height:40px;color:#333;font-weight:normal;"><span style="font-size:27px;letter-spacing:1.7px">0.00</span></div>
<svg class="a" style="left:2444px;top:792px;" width="37" height="37" viewBox="0 0 37 37"><circle cx="18.5" cy="18.5" r="18.5" fill="#7670f4"/><path d="M18.5 9 V28 M9 18.5 H28" stroke="#fff" stroke-width="4.5"/></svg>
<svg class="a" style="left:118px;top:894px;" width="84" height="84" viewBox="0 0 84 84"><path d="M7 5 V10 Q7 13.5 10 13.5 Q13 13.5 13 10 V8" fill="none" stroke="#6a5ff2" stroke-width="1.8"/><circle cx="13.2" cy="5.6" r="1.3" fill="#2aa06a"/><text x="16" y="13" font-size="7" fill="#6a5ff2" font-family="Liberation Sans">优麦云</text><ellipse cx="31" cy="28" rx="7" ry="9" fill="#ede7d9" transform="rotate(-25 31 28)"/><ellipse cx="51" cy="28" rx="7" ry="9" fill="#ede7d9" transform="rotate(25 51 28)"/><ellipse cx="31.5" cy="29" rx="4" ry="6" fill="#e4d9c6" transform="rotate(-25 31.5 29)"/><ellipse cx="50.5" cy="29" rx="4" ry="6" fill="#e4d9c6" transform="rotate(25 50.5 29)"/><ellipse cx="41.5" cy="62" rx="12.5" ry="12.5" fill="#eee8db"/><ellipse cx="41" cy="42" rx="13" ry="9.5" fill="#f2eee4"/><ellipse cx="25.5" cy="68.5" rx="5.5" ry="6.5" fill="#ebe4d5"/><ellipse cx="58" cy="68.5" rx="5.5" ry="6.5" fill="#ebe4d5"/><path d="M37 52 Q36 62 38 72 M46 52 Q47 62 45 72" fill="none" stroke="#ddd4c2" stroke-width="1.2"/><ellipse cx="41.5" cy="74.5" rx="16" ry="1.6" fill="#e6e0d4"/><circle cx="37" cy="41" r="0.9" fill="#6a7a8a"/><circle cx="46" cy="41" r="0.9" fill="#6a7a8a"/><circle cx="41.5" cy="43" r="1.1" fill="#e8a0a8"/></svg>
<svg class="a" style="left:238px;top:914px;opacity:1.0" width="33" height="22" viewBox="0 0 33 22"><rect x="0" y="0.00" width="33" height="1.99" fill="#c9303e"/><rect x="0" y="1.69" width="33" height="1.99" fill="#ffffff"/><rect x="0" y="3.38" width="33" height="1.99" fill="#c9303e"/><rect x="0" y="5.08" width="33" height="1.99" fill="#ffffff"/><rect x="0" y="6.77" width="33" height="1.99" fill="#c9303e"/><rect x="0" y="8.46" width="33" height="1.99" fill="#ffffff"/><rect x="0" y="10.15" width="33" height="1.99" fill="#c9303e"/><rect x="0" y="11.85" width="33" height="1.99" fill="#ffffff"/><rect x="0" y="13.54" width="33" height="1.99" fill="#c9303e"/><rect x="0" y="15.23" width="33" height="1.99" fill="#ffffff"/><rect x="0" y="16.92" width="33" height="1.99" fill="#c9303e"/><rect x="0" y="18.62" width="33" height="1.99" fill="#ffffff"/><rect x="0" y="20.31" width="33" height="1.99" fill="#c9303e"/><rect x="0" y="0" width="13.9" height="11.8" fill="#1f4a8a"/></svg>
<div class="t" style="left:279px;top:904.0px;font-size:26px;line-height:40px;color:#222;font-weight:normal;"><span style="font-size:27px;letter-spacing:0.6px">B<span style="font-size:35px;letter-spacing:1.8px;vertical-align:-3px">***</span>G</span></div>
<div class="t" style="left:239px;top:946.0px;font-size:26px;line-height:40px;color:#999;font-weight:normal;"><span style="font-size:27px;letter-spacing:0.6px">a<span style="font-size:35px;letter-spacing:1.8px;vertical-align:-3px">***</span>C</span></div>
<div class="t" style="left:561px;top:905.0px;font-size:26px;line-height:40px;color:#9ea2aa;font-weight:normal;">可售库存</div>
<div class="t" style="left:664px;top:905.0px;font-size:27px;line-height:40px;color:#9ea2aa;font-weight:normal;">:</div>
<div class="t" style="left:688px;top:905.0px;font-size:26px;line-height:40px;color:#444;font-weight:normal;"><span style="font-size:27px;letter-spacing:1.7px">0</span></div>
<div class="t" style="left:561px;top:947.0px;font-size:26px;line-height:40px;color:#9ea2aa;font-weight:normal;">可售天数</div>
<div class="t" style="left:664px;top:947.0px;font-size:27px;line-height:40px;color:#9ea2aa;font-weight:normal;">:</div>
<div class="t" style="left:689px;top:947.0px;font-size:26px;line-height:40px;color:#444;font-weight:normal;"><span style="font-size:27px;letter-spacing:1.7px">--</span></div>
<div class="t" style="left:968px;top:904.0px;font-size:26px;line-height:40px;color:#333;font-weight:normal;"><span style="font-size:27px;letter-spacing:1.7px">$77.99</span></div>
<div class="t" style="left:968px;top:946.0px;font-size:26px;line-height:40px;color:#333;font-weight:normal;"><span style="font-size:27px;letter-spacing:1.7px">$119.99</span></div>
<div class="t" style="left:1377px;top:904.0px;font-size:26px;line-height:40px;color:#333;font-weight:normal;"><span style="font-size:27px;letter-spacing:1.7px">$119.99</span></div>
<div class="t" style="left:1377px;top:946.0px;font-size:26px;line-height:40px;color:#333;font-weight:normal;"><span style="font-size:27px;letter-spacing:1.7px">0.00</span></div>
<svg class="a" style="left:2444px;top:926px;" width="37" height="37" viewBox="0 0 37 37"><circle cx="18.5" cy="18.5" r="18.5" fill="#7670f4"/><path d="M18.5 9 V28 M9 18.5 H28" stroke="#fff" stroke-width="4.5"/></svg>
<div class="t" style="left:1786px;top:526px;font-size:26px;line-height:32px;color:#222;border-bottom:2px dashed #9aa0aa;padding-bottom:0">跟卖调价 <span style="font-size:27px;letter-spacing:1.6px">:test20250619</span></div>
<div class="t" style="left:2291px;top:523.0px;font-size:26px;line-height:40px;color:#9a9a9a;font-weight:normal;">解除绑定,并添加</div>
<div class="a" style="left:82px;top:986px;width:2435px;height:2px;background:#ececec"></div>
<div class="a" style="left:82px;top:988px;width:2435px;height:20px;background:#fff"></div>
<div class="a" style="left:2498px;top:341px;width:19px;height:645px;background:#f0f0f0"></div>
<div class="a" style="left:2498px;top:341px;width:19px;height:104px;background:#c4c4c4;border-radius:10px"></div>
<div class="t" style="left:145px;top:1017.0px;font-size:26px;line-height:40px;color:#222;font-weight:normal;"><span style="color:#6d65e8"><span style="font-size:27px;letter-spacing:1.7px">1-30</span></span><span style="font-size:27px;letter-spacing:1.7px"> / 34</span></div>
<div class="t" style="left:354px;top:1019.0px;font-size:26px;line-height:40px;color:#bdbdbd;font-weight:normal;">上一页</div>
<div class="a" style="left:467px;top:1012px;width:52px;height:52px;background:#7670f4;border-radius:6px"></div>
<div class="t" style="left:486px;top:1018.0px;font-size:26px;line-height:40px;color:#fff;font-weight:bold;"><span style="font-size:27px;letter-spacing:0px">1</span></div>
<div class="t" style="left:557px;top:1018.0px;font-size:26px;line-height:40px;color:#666;font-weight:normal;"><span style="font-size:27px;letter-spacing:0px">2</span></div>
<div class="t" style="left:672px;top:1019.0px;font-size:26px;line-height:40px;color:#777;font-weight:normal;">下一页</div>
<div class="a" style="left:2318px;top:1006px;width:199px;height:63px;border:2px solid #e0e0e8;border-radius:7px;background:#fff"></div>
<div class="t" style="left:2344px;top:1018.0px;font-size:26px;line-height:40px;color:#222;font-weight:normal;"><span style="font-size:27px;letter-spacing:1.7px">30</span>条/页</div>
<svg class="a" style="left:2478px;top:1032px;" width="16" height="12" viewBox="0 0 16 12"><path d="M0.8 0.8 L8.0 11.2 L15.2 0.8" fill="none" stroke="#bbbbc2" stroke-width="1.6"/></svg>
<div class="a" style="left:82px;top:1136px;width:2435px;height:2px;background:#ececec"></div>
<div class="a" style="left:83px;top:1187px;width:135px;height:63px;border:2px solid #dcdce6;border-right:none;border-radius:7px 0 0 7px;background:#fff"></div>
<div class="t" style="left:107px;top:1199.0px;font-size:26px;line-height:40px;color:#222;font-weight:normal;"><span style="font-size:27px;letter-spacing:0.3px">SKU</span></div>
<svg class="a" style="left:179px;top:1213px;" width="17" height="12" viewBox="0 0 17 12"><path d="M0.9 0.9 L8.5 11.1 L16.1 0.9" fill="none" stroke="#b9b9c2" stroke-width="1.8"/></svg>
<div class="a" style="left:217px;top:1187px;width:461px;height:63px;border:2px solid #e0e0e6;background:#f4f4f4"></div>
<div class="t" style="left:242px;top:1202.5px;font-size:26px;line-height:40px;color:#666;font-weight:normal;"><span style="font-size:36px;letter-spacing:2.8px">******</span></div>
<div class="a" style="left:696px;top:1187px;width:168px;height:64px;background:#7670f4;border-radius:8px;box-shadow:0 3px 4px rgba(118,112,244,.18)"></div>
<div class="t" style="left:729px;top:1200.0px;font-size:26px;line-height:40px;color:#fff;font-weight:normal;">立即查询</div>
<div class="t" style="left:84px;top:1272.0px;font-size:26px;line-height:40px;color:#222;font-weight:normal;">已添加<span style="font-size:27px;letter-spacing:0px">0</span>个</div>
<div class="t" style="left:1827px;top:1282.0px;font-size:26px;line-height:40px;color:#7670f4;font-weight:normal;">批量启动</div>
<div class="t" style="left:1994px;top:1282.0px;font-size:26px;line-height:40px;color:#7670f4;font-weight:normal;">批量暂停</div>
<div class="t" style="left:2163px;top:1282.0px;font-size:26px;line-height:40px;color:#7670f4;font-weight:normal;">批量删除</div>
<div class="t" style="left:2330px;top:1282.0px;font-size:26px;line-height:40px;color:#7670f4;font-weight:normal;">删除本次新增</div>
<div class="a" style="left:82px;top:1330px;width:2435px;height:92px;background:#f9f9f9;border-radius:8px 8px 0 0;border-bottom:2px solid #e8e8e8"></div>
<div class="a" style="left:146px;top:1330px;width:2px;height:92px;background:#f2f2f2"></div>
<div class="a" style="left:286px;top:1330px;width:4px;height:92px;background:#ffffff"></div>
<div class="a" style="left:98px;top:1372px;width:32px;height:32px;border:2px solid #d6d6d6;border-radius:7px;background:#efefef"></div>
<div class="t" style="left:177px;top:1368.0px;font-size:26px;line-height:40px;color:#8a8a8a;font-weight:bold;">状态</div>
<svg class="a" style="left:236px;top:1379px;" width="21" height="21" viewBox="0 0 21 21"><circle cx="10.5" cy="10.5" r="9.3" fill="none" stroke="#8c9cc4" stroke-width="1.6"/><path d="M7.4 8.2 Q7.4 5 10.5 5 Q13.6 5 13.6 7.9 Q13.6 9.8 11.3 10.8 Q10.5 11.3 10.5 12.6" fill="none" stroke="#8c9cc4" stroke-width="1.5"/><circle cx="10.5" cy="15.4" r="1" fill="#8c9cc4"/></svg>
<div class="t" style="left:308px;top:1368.0px;font-size:26px;line-height:40px;color:#8a8a8a;font-weight:bold;">商品信息</div>
<svg class="a" style="left:419px;top:1379px;" width="21" height="21" viewBox="0 0 21 21"><circle cx="10.5" cy="10.5" r="9.3" fill="none" stroke="#8c9cc4" stroke-width="1.6"/><path d="M7.4 8.2 Q7.4 5 10.5 5 Q13.6 5 13.6 7.9 Q13.6 9.8 11.3 10.8 Q10.5 11.3 10.5 12.6" fill="none" stroke="#8c9cc4" stroke-width="1.5"/><circle cx="10.5" cy="15.4" r="1" fill="#8c9cc4"/></svg>
<div class="t" style="left:763px;top:1347.0px;font-size:26px;line-height:40px;color:#8a8a8a;font-weight:bold;">原价<svg style="display:inline-block;vertical-align:-3px;margin:0 3px 0 3px" width="13" height="24" viewBox="0 0 13 24"><path d="M11.2 0 L1.8 24" stroke="currentColor" stroke-width="3.6"/></svg>优惠价</div>
<svg class="a" style="left:769px;top:1399px;" width="21" height="21" viewBox="0 0 21 21"><circle cx="10.5" cy="10.5" r="9.3" fill="none" stroke="#8c9cc4" stroke-width="1.6"/><path d="M7.4 8.2 Q7.4 5 10.5 5 Q13.6 5 13.6 7.9 Q13.6 9.8 11.3 10.8 Q10.5 11.3 10.5 12.6" fill="none" stroke="#8c9cc4" stroke-width="1.5"/><circle cx="10.5" cy="15.4" r="1" fill="#8c9cc4"/></svg>
<div class="t" style="left:963px;top:1347.0px;font-size:26px;line-height:40px;color:#8a8a8a;font-weight:bold;">总价<svg style="display:inline-block;vertical-align:-3px;margin:0 3px 0 3px" width="13" height="24" viewBox="0 0 13 24"><path d="M11.2 0 L1.8 24" stroke="currentColor" stroke-width="3.6"/></svg>运费</div>
<svg class="a" style="left:970px;top:1399px;" width="21" height="21" viewBox="0 0 21 21"><circle cx="10.5" cy="10.5" r="9.3" fill="none" stroke="#8c9cc4" stroke-width="1.6"/><path d="M7.4 8.2 Q7.4 5 10.5 5 Q13.6 5 13.6 7.9 Q13.6 9.8 11.3 10.8 Q10.5 11.3 10.5 12.6" fill="none" stroke="#8c9cc4" stroke-width="1.5"/><circle cx="10.5" cy="15.4" r="1" fill="#8c9cc4"/></svg>
<div class="t" style="left:1255px;top:1369.0px;font-size:26px;line-height:40px;color:#8a8a8a;font-weight:bold;">调价对象</div>
<div class="t" style="left:1541px;top:1347.0px;font-size:26px;line-height:40px;color:#8a8a8a;font-weight:bold;">默认价格(含运</div>
<div class="t" style="left:1608px;top:1389.0px;font-size:26px;line-height:40px;color:#8a8a8a;font-weight:bold;">费)</div>
<div class="t" style="left:1780px;top:1369.0px;font-size:26px;line-height:40px;color:#8a8a8a;font-weight:bold;">能接受最低<svg style="display:inline-block;vertical-align:-3px;margin:0 3px 0 3px" width="13" height="24" viewBox="0 0 13 24"><path d="M11.2 0 L1.8 24" stroke="currentColor" stroke-width="3.6"/></svg>最高价(含运费)</div>
<div class="t" style="left:2172px;top:1368.0px;font-size:26px;line-height:40px;color:#8a8a8a;font-weight:bold;">新增<svg style="display:inline-block;vertical-align:-3px;margin:0 3px 0 3px" width="13" height="24" viewBox="0 0 13 24"><path d="M11.2 0 L1.8 24" stroke="currentColor" stroke-width="3.6"/></svg>已应用</div>
<div class="t" style="left:2371px;top:1368.0px;font-size:26px;line-height:40px;color:#8a8a8a;font-weight:bold;">删除</div>
<div class="a" style="left:285px;top:1367px;width:2px;height:42px;background:#e4e4e4"></div>
<div class="a" style="left:750px;top:1367px;width:2px;height:42px;background:#e4e4e4"></div>
<div class="a" style="left:945px;top:1367px;width:2px;height:42px;background:#e4e4e4"></div>
<div class="a" style="left:1105px;top:1367px;width:2px;height:42px;background:#e4e4e4"></div>
<div class="a" style="left:1505px;top:1367px;width:2px;height:42px;background:#e4e4e4"></div>
<div class="a" style="left:1745px;top:1367px;width:2px;height:42px;background:#e4e4e4"></div>
<div class="a" style="left:2145px;top:1367px;width:2px;height:42px;background:#e4e4e4"></div>
<div class="a" style="left:2345px;top:1367px;width:2px;height:42px;background:#e4e4e4"></div>
<div class="t" style="left:143px;top:1452.0px;font-size:26px;line-height:40px;color:#222;font-weight:normal;"><span style="color:#6d65e8"><span style="font-size:27px;letter-spacing:1.7px">0-0</span></span><span style="font-size:27px;letter-spacing:1.7px"> / 0</span></div>
<div class="t" style="left:321px;top:1453.0px;font-size:26px;line-height:40px;color:#bdbdbd;font-weight:normal;">上一页</div>
<div class="t" style="left:453px;top:1453.0px;font-size:26px;line-height:40px;color:#666;font-weight:normal;"><span style="font-size:27px;letter-spacing:0px">1</span></div>
<div class="t" style="left:567px;top:1453.0px;font-size:26px;line-height:40px;color:#bdbdbd;font-weight:normal;">下一页</div>
<div class="a" style="left:2318px;top:1441px;width:199px;height:63px;border:2px solid #e0e0e8;border-radius:7px;background:#fff"></div>
<div class="t" style="left:2344px;top:1453.0px;font-size:26px;line-height:40px;color:#222;font-weight:normal;"><span style="font-size:27px;letter-spacing:1.7px">30</span>条/页</div>
<svg class="a" style="left:2478px;top:1467px;" width="16" height="12" viewBox="0 0 16 12"><path d="M0.8 0.8 L8.0 11.2 L15.2 0.8" fill="none" stroke="#bbbbc2" stroke-width="1.6"/></svg>
</div>
<svg class="a" style="left:0;top:0;pointer-events:none" width="2940" height="1594"><defs><pattern id="wm" patternUnits="userSpaceOnUse" width="292" height="108.8" x="1728.6" y="808.8"><g font-family="Liberation Mono" font-size="25" fill="rgba(185,185,185,0.05)"><text x="0" y="0" transform="rotate(-20 0 0)">17185</text><text x="0" y="108.8" transform="rotate(-20 0 108.8)">17185</text><text x="146" y="51.5" transform="rotate(-20 146 51.5)">17185</text><text x="-146" y="51.5" transform="rotate(-20 -146 51.5)">17185</text><text x="292" y="0" transform="rotate(-20 292 0)">17185</text><text x="292" y="108.8" transform="rotate(-20 292 108.8)">17185</text></g></pattern></defs><rect x="0" y="130" width="2920" height="1464" fill="url(#wm)"/><rect x="160" y="0" width="2600" height="130" fill="url(#wm)"/></svg>
<div class="a" style="left:2426px;top:572px;width:233px;height:82px;border:7.5px solid #f24848;border-radius:13px"></div>
<svg class="a" style="left:2360px;top:380px;" width="130" height="200" viewBox="2360 380 130 200"><path d="M2371 393 L2378 387 L2460 500 L2474 503 Q2477 503 2477 507 L2479 560 Q2479 566 2473 564 L2424 532 Q2420 528 2425 525 L2438 515 Z" fill="#f24a4a"/></svg>
</body></html>
